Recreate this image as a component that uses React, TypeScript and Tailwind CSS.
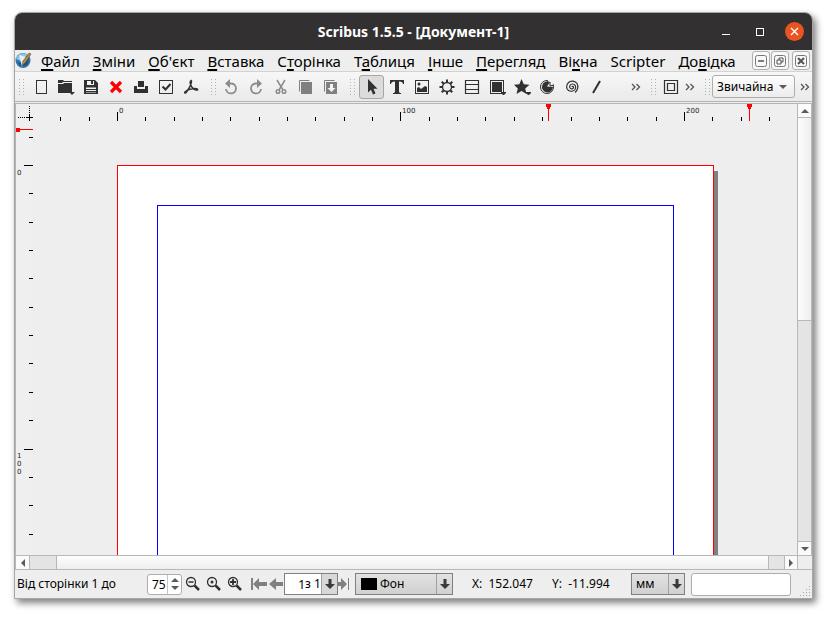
import type { ReactNode } from "react";

const STEP = 28.35;
const DARK = "#323030";
const GREY = "#808080";

const menus: [string, string, string][] = [
  ["", "Ф", "айл"],
  ["", "З", "міни"],
  ["", "О", "б'єкт"],
  ["", "В", "ставка"],
  ["С", "т", "орінка"],
  ["Т", "а", "блиця"],
  ["", "І", "нше"],
  ["", "П", "ерегляд"],
  ["Ві", "к", "на"],
  ["Scripter", "", ""],
  ["До", "в", "ідка"],
];

function Icon({ children, w = 16, h = 16 }: { children: ReactNode; w?: number; h?: number }) {
  return (
    <svg width={w} height={h} viewBox={`0 0 ${w} ${h}`} fill="none" aria-hidden="true" className="shrink-0">
      {children}
    </svg>
  );
}

function ToolButton({ label, active, children }: { label: string; active?: boolean; children: ReactNode }) {
  return (
    <button
      type="button"
      aria-label={label}
      className={
        active
          ? "flex h-6 w-[25px] shrink-0 items-center justify-center rounded-[3px] border border-[#a6a6a6] bg-[#dcdcdc]"
          : "flex h-6 w-[25px] shrink-0 items-center justify-center"
      }
    >
      {children}
    </button>
  );
}

function Handle() {
  const dots = [0, 3, 6, 9, 12, 15].flatMap((y) => [
    [0, y],
    [4, y],
  ]);
  return (
    <Icon w={6} h={18}>
      {dots.map(([x, y]) => (
        <rect key={`${x}-${y}`} x={x} y={y + 1} width="1" height="1" fill="#b4b4b4" />
      ))}
    </Icon>
  );
}

function More() {
  return (
    <button type="button" aria-label="Більше" className="flex h-6 w-[13px] shrink-0 items-center justify-center">
      <Icon w={10} h={8}>
        <path d="M1 1l3 3-3 3M5.500 1l3 3-3 3" stroke="#555" strokeWidth="1.300" />
      </Icon>
    </button>
  );
}

const fileIcons: [string, ReactNode][] = [
  ["Новий", <rect x="3.500" y="1.500" width="10" height="13" stroke={DARK} />],
  [
    "Відкрити",
    <g fill={DARK}>
      <path d="M1 1h5l1 1h8v1H6L5 4H1zM1 5h5l1-1h8v10H1z" />
      <path d="M12 13h6l-3 3z" />
    </g>,
  ],
  [
    "Зберегти",
    <g>
      <path d="M1 1h11l3 3v11H1z" fill={DARK} />
      <path d="M4 2h7v4H4z M3 8.500h10v5H3z" fill="#f2f2f2" />
      <path d="M8 2h2v3H8z M3 10h10v1H3z M3 12h10v1H3z" fill={DARK} />
    </g>,
  ],
  ["Закрити", <path d="M3 3l10 10M13 3L3 13" stroke="#f00" strokeWidth="3.200" />],
  ["Друк", <path d="M5 2h6v6h1V7h3v7H1V7h3v3h8V8H5z" fill={DARK} />],
  [
    "Перевірити",
    <g stroke={DARK}>
      <rect x="1.500" y="1.500" width="13" height="13" />
      <path d="M4.500 7.500l3 3 5-5.500" strokeWidth="2" />
    </g>,
  ],
  [
    "PDF",
    <path
      d="M8 1.500c-1.500 1-.5 4 .5 6s3.500 3.500 5.500 3.500c1 0 1-1-.5-1.300C9 9 4 11 2 13c-1 1.200.5 1.500 1.500 0C6 9.500 8.500 5 8.500 2z"
      stroke={DARK}
      strokeWidth="1.500"
    />,
  ],
];

const editIcons: [string, ReactNode][] = [
  [
    "Скасувати",
    <g>
      <path d="M6 4.500h2.500a5 5 0 1 1-5.500 5.500" stroke="#8c8c8c" strokeWidth="1.800" />
      <path d="M7 0v9L2 4.500z" fill="#8c8c8c" />
    </g>,
  ],
  [
    "Повторити",
    <g>
      <path d="M10 4.500H7.500a5 5 0 1 0 5.500 5.500" stroke="#8c8c8c" strokeWidth="1.800" />
      <path d="M9 0v9l5-4.500z" fill="#8c8c8c" />
    </g>,
  ],
  [
    "Вирізати",
    <g stroke="#8c8c8c" strokeWidth="1.500">
      <path d="M4 1l6 10M12 1L6 11" />
      <circle cx="5" cy="12.500" r="1.800" />
      <circle cx="11" cy="12.500" r="1.800" />
    </g>,
  ],
  [
    "Копіювати",
    <g>
      <path d="M1.500 12.500V1.500h10" stroke={GREY} />
      <rect x="3" y="3" width="11" height="12" fill={GREY} />
    </g>,
  ],
  [
    "Вставити",
    <g>
      <path d="M1.500 12.500V1.500h10" stroke={GREY} />
      <rect x="3" y="3" width="11" height="12" fill={GREY} />
      <path d="M7 5h3v4h2.500l-4 4-4-4H7z" fill="#f4f4f4" />
    </g>,
  ],
];

const toolIcons: [string, ReactNode][] = [
  ["Вибір", <path d="M4 0v13.500l3-2.800 2 4.800 2.500-1-2-4.700h4z" fill={DARK} />],
  ["Текст", <path d="M1 1h14v4h-1c-.3-1.500-1-2.500-4-2.500V12c0 1.500.5 2 2 2v1H4v-1c1.500 0 2-.5 2-2V2.500C3 2.500 2.300 3.500 2 5H1z" fill={DARK} />],
  [
    "Зображення",
    <g>
      <rect x="1.500" y="1.500" width="13" height="13" stroke={DARK} />
      <path d="M3 13V9l2-1 2 2 4-3 2 1v5z" fill={DARK} />
      <circle cx="5" cy="5" r="1.500" fill={DARK} />
    </g>,
  ],
  [
    "Рендер",
    <g stroke={DARK}>
      <circle cx="8" cy="8" r="4.500" strokeWidth="1.400" />
      <path d="M8 .5v3M8 12.500v3M.5 8h3M12.500 8h3M2.700 2.700l2.100 2.100M11.200 11.200l2.100 2.100M2.700 13.300l2.100-2.100M11.200 4.800l2.100-2.100" strokeWidth="2" />
    </g>,
  ],
  ["Таблиця", <path d="M1.500 1.500h13v13h-13zM1.500 5.500h13M1.500 10.500h13" stroke={DARK} strokeWidth="1.200" />],
  [
    "Фігура",
    <g>
      <rect x="2.500" y="1.500" width="13" height="13" stroke={DARK} />
      <path d="M4 3h10v10H4zM13 13h5v1l-2.500 2.500L13 14z" fill={DARK} />
    </g>,
  ],
  [
    "Багатокутник",
    <path d="M8.500 0l2.300 5.200 5.700.5-4.300 3.700 1.300 5.600-5-3-5 3 1.300-5.600L1 5.700l5.300-.5zM13 13h5v1l-2.500 2.500L13 14z" fill={DARK} />,
  ],
  [
    "Дуга",
    <g>
      <circle cx="8" cy="8" r="6.500" stroke={DARK} />
      <path d="M9 7V0h7v5z" fill="#f1f1f1" />
      <path d="M8 7.500L11 3A5.500 5.500 0 1 0 14 8z" fill={DARK} />
      <path d="M11 3v4l4-1" stroke={DARK} />
    </g>,
  ],
  [
    "Спіраль",
    <path
      d="M8 8c0-1 1.500-.8 1.500.5S7 10.500 6 9s0-4 2.500-4S12 7 11.500 9.500 7 13 4.500 11.500 2 6 4.500 3.500s7-1.500 8.500 1 1 7-2 9"
      stroke={DARK}
      strokeWidth="1.200"
    />,
  ],
  ["Лінія", <path d="M4 14l7-12" stroke={DARK} strokeWidth="2" />],
];

function HorizontalRuler() {
  const ticks = Array.from({ length: 26 }, (_, i) => i - 2);
  return (
    <svg className="h-[17px] w-full bg-[#efefef] font-['DejaVu_Sans',sans-serif]" aria-label="Горизонтальна лінійка">
      {ticks.map((k) => {
        const x = Math.floor(84.4 + k * STEP);
        const major = k % 10 === 0;
        return <rect key={k} x={x} y={major ? 8 : 13} width="1" height={major ? 9 : 4} fill="#000" />;
      })}
      {[0, 100, 200].map((n) => (
        <text key={n} x={Math.floor(84.4 + (n / 10) * STEP) + 2} y="9" fontSize="7" fill="#222">
          {n}
        </text>
      ))}
      {[515, 716].map((x) => (
        <path key={x} d={`M${x - 2} 0h5v3h-1v2h-1v12h-1V5h-1V3h-1z`} fill="#f00" />
      ))}
    </svg>
  );
}

function VerticalRuler() {
  const ticks = Array.from({ length: 15 }, (_, i) => i - 1);
  return (
    <svg className="h-full w-[17px] bg-[#efefef] font-['DejaVu_Sans',sans-serif]" aria-label="Вертикальна лінійка">
      {ticks.map((k) => {
        const y = Math.floor(44.5 + k * STEP);
        const major = k % 10 === 0;
        return <rect key={k} x={major ? 8 : 13} y={y} width={major ? 9 : 4} height="1" fill="#000" />;
      })}
      <text x="1" y="54" fontSize="7" fill="#222">0</text>
      <text fontSize="7" fill="#222">
        <tspan x="1" y="337">1</tspan>
        <tspan x="1" y="345">0</tspan>
        <tspan x="1" y="353">0</tspan>
      </text>
      <path d="M0 7h4v1h13v1H4v2H0z" fill="#f00" />
    </svg>
  );
}

function Arrow({ dir }: { dir: "up" | "down" | "left" | "right" }) {
  const paths = {
    up: "M0 6l4-4 4 4z",
    down: "M0 2l4 4 4-4z",
    left: "M6 0L2 4l4 4z",
    right: "M2 0l4 4-4 4z",
  };
  return (
    <Icon w={8} h={8}>
      <path d={paths[dir]} fill="#5a5a5a" />
    </Icon>
  );
}

function DropArrow() {
  return (
    <Icon w={10} h={12}>
      <path d="M3.500 1h3v5H10l-5 5-5-5h3.500z" fill="#3a3a3a" />
    </Icon>
  );
}

function Zoom({ label, children }: { label: string; children: ReactNode }) {
  return (
    <button type="button" aria-label={label} className="flex h-6 w-[21px] shrink-0 items-center justify-center">
      <Icon>
        <circle cx="6" cy="6" r="4.500" stroke={DARK} strokeWidth="1.300" />
        <path d="M9.500 9.500l4.500 4.500" stroke={DARK} strokeWidth="2.500" />
        {children}
      </Icon>
    </button>
  );
}

const mdiButton =
  "flex h-[19px] w-[18px] items-center justify-center rounded-[3px] border border-[#b0b0b0] bg-[#f8f8f8]";

export default function App() {
  return (
    <div className="bg-white pt-3 pr-[18px] pb-[18px] pl-[14px] font-['Noto_Sans','Open_Sans',sans-serif] text-[12px] leading-4 text-black">
      <div className="flex flex-col overflow-hidden rounded-t-lg border border-[#a6a6a6] bg-[#eeeeee] shadow-[3px_4px_7px_0_#00000080]">
        <header className="flex h-[37px] items-center bg-[#323030] text-white">
          <div className="w-[106px]" />
          <h1 className="flex-1 text-center text-[14px] leading-5 font-bold">Scribus 1.5.5 - [Документ-1]</h1>
          <div className="flex w-[106px] items-center justify-end gap-5 pr-2">
            <button type="button" aria-label="Згорнути" className="flex h-5 w-[14px] items-center justify-center">
              <Icon w={8} h={8}><path d="M0 6.500h8" stroke="#fff" /></Icon>
            </button>
            <button type="button" aria-label="Розгорнути" className="flex h-5 w-[14px] items-center justify-center">
              <Icon w={8} h={8}><rect x=".5" y=".5" width="7" height="7" stroke="#fff" /></Icon>
            </button>
            <button type="button" aria-label="Закрити вікно" className="-ml-0.5 flex size-[19px] items-center justify-center rounded-full bg-[#e95420]">
              <Icon w={9} h={9}><path d="M1 1l7 7M8 1L1 8" stroke="#fff" strokeWidth="1.400" /></Icon>
            </button>
          </div>
        </header>

        <nav className="flex h-[22px] items-center border-b border-[#d2d2d2] text-[15px] leading-5">
          <Icon w={17} h={17}>
            <circle cx="8" cy="8.500" r="7.500" fill="#2b78b0" />
            <path d="M1 7a7.500 7.500 0 0 1 12-4L6 9z" fill="#8fc3e6" />
            <path d="M3 11a6 6 0 0 0 10 1l1-5z" fill="#1b5485" />
            <path d="M4 3l3 12 2-4 2-6z" fill="#e8eef2" />
            <path d="M7 14l1-5 6-8 2 1-5 8z" fill="#b08a4a" stroke="#4d3a1b" strokeWidth=".5" />
          </Icon>
          <div className="flex flex-1 gap-[13px] pl-[9px]">
            {menus.map(([a, b, c]) => (
              <button key={a + b + c} type="button" className="whitespace-nowrap">
                {a}
                <span className="underline decoration-2 underline-offset-2">{b}</span>
                {c}
              </button>
            ))}
          </div>
          <div className="flex gap-px pr-[2px]">
            <button type="button" aria-label="Згорнути документ" className={mdiButton}>
              <Icon w={12} h={12}><rect x=".5" y=".5" width="11" height="11" rx="2" stroke="#777" /><path d="M3 6h6" stroke="#555" strokeWidth="1.500" /></Icon>
            </button>
            <button type="button" aria-label="Відновити документ" className={mdiButton}>
              <Icon w={12} h={12}><rect x=".5" y=".5" width="11" height="11" rx="2" stroke="#777" /><path d="M5 5V3h4v4H7M3 5h4v4H3z" stroke="#555" /></Icon>
            </button>
            <button type="button" aria-label="Закрити документ" className={`${mdiButton} ml-[2px]`}>
              <Icon w={12} h={12}><rect x=".5" y=".5" width="11" height="11" rx="2" stroke="#777" /><path d="M3 3l6 6M9 3L3 9" stroke="#555" strokeWidth="2" /></Icon>
            </button>
          </div>
        </nav>

        <div className="flex h-[30px] items-center border-b border-[#b4b4b4] bg-linear-to-b from-[#f7f7f7] to-[#eaeaea]">
          <div className="flex w-[13px] justify-end pr-[3px]"><Handle /></div>
          {fileIcons.map(([label, icon], i) => (
            <ToolButton key={label} label={label}><Icon w={i === 1 ? 18 : 16}>{icon}</Icon></ToolButton>
          ))}
          <div className="flex w-[15px] justify-end pr-px"><Handle /></div>
          {editIcons.map(([label, icon]) => (
            <ToolButton key={label} label={label}><Icon>{icon}</Icon></ToolButton>
          ))}
          <div className="flex w-4 justify-end pr-[3px]"><Handle /></div>
          {toolIcons.map(([label, icon], i) => (
            <ToolButton key={label} label={label} active={i === 0}>
              <Icon w={i === 5 || i === 6 ? 18 : 16}>{icon}</Icon>
            </ToolButton>
          ))}
          <div className="flex flex-1 items-center justify-end pr-px">
            <More />
            <div className="flex w-4 justify-center pl-2"><Handle /></div>
            <ToolButton label="Рамка">
              <Icon><path d="M1.500 1.500h13v13h-13zM4.500 4.500h7v7h-7z" stroke={DARK} strokeWidth="1.200" /></Icon>
            </ToolButton>
            <More />
            <div className="flex w-4 justify-center pl-2"><Handle /></div>
            <div className="grid items-center">
              <select aria-label="Якість перегляду" className="col-start-1 row-start-1 h-[23px] w-[83px] appearance-none rounded-[3px] border border-[#adadad] bg-linear-to-b from-[#fdfdfd] to-[#ececec] pl-1">
                <option>Звичайна</option>
              </select>
              <span className="pointer-events-none col-start-1 row-start-1 justify-self-end pr-2"><Arrow dir="down" /></span>
            </div>
            <div className="ml-[3px] flex"><More /></div>
          </div>
        </div>

        <div className="mt-px flex border-t border-l border-[#b4b4b4]">
          <div className="w-[17px] shrink-0">
            <svg className="block h-[17px] w-[17px] bg-[#efefef]" aria-hidden="true">
              <path d="M13.500 2v8M2 13.500h8" stroke="#000" strokeDasharray="1 1" />
              <path d="M13.500 10v7M10 13.500h7" stroke="#000" />
            </svg>
            <div className="h-[434px]"><VerticalRuler /></div>
          </div>
          <main className="flex min-w-0 flex-1 flex-col">
            <HorizontalRuler />
            <div className="h-[434px] overflow-hidden pt-[44px] pl-[84px]">
              <div className="h-[842px] w-[597px] border border-[#f00] bg-white p-[39px] shadow-[4px_6px_0_#808080]">
                <div className="h-full border border-[#00f]" />
              </div>
            </div>
          </main>
          <div className="flex w-[15px] shrink-0 flex-col border-x border-[#b8b8b8] bg-[#e4e4e4]">
            <button type="button" aria-label="Вгору" className="flex h-[14px] items-center justify-center border-b border-[#b8b8b8] bg-[#fafafa]"><Arrow dir="up" /></button>
            <div className="h-[203px] border-b border-[#b8b8b8] bg-linear-to-r from-[#fdfdfd] to-[#eeeeee]" />
            <div className="flex-1" />
            <button type="button" aria-label="Вниз" className="flex h-[14px] items-center justify-center border-t border-[#b8b8b8] bg-[#fafafa]"><Arrow dir="down" /></button>
          </div>
        </div>
        <div className="flex h-[15px] border-y border-l border-[#b8b8b8] bg-[#e4e4e4]">
          <button type="button" aria-label="Ліворуч" className="flex w-[14px] items-center justify-center border-r border-[#b8b8b8] bg-[#fafafa]"><Arrow dir="left" /></button>
          <div className="w-[26px]" />
          <div className="flex-1 border-x border-[#b8b8b8] bg-linear-to-b from-[#fdfdfd] to-[#eeeeee]" />
          <div className="w-[15px]" />
          <button type="button" aria-label="Праворуч" className="flex w-[14px] items-center justify-center border-x border-[#b8b8b8] bg-[#fafafa]"><Arrow dir="right" /></button>
          <div className="w-[14px] bg-[#eeeeee]" />
        </div>

        <footer className="flex h-7 items-center pl-[2px]">
          <span className="w-[130px] whitespace-nowrap">Від сторінки 1 до</span>
          <div className="flex h-[21px] w-[35px] items-center overflow-hidden rounded-[3px] border border-[#adadad] bg-white">
            <input aria-label="Масштаб" defaultValue="75" className="h-full w-5 min-w-0 border-r border-[#c4c4c4] pl-1 outline-none" />
            <div className="flex flex-1 flex-col items-center"><Arrow dir="up" /><Arrow dir="down" /></div>
          </div>
          <Zoom label="Зменшити"><path d="M3.500 6h5" stroke={DARK} strokeWidth="1.500" /></Zoom>
          <Zoom label="Масштаб 100%"><circle cx="6" cy="6" r="1.500" fill={DARK} /></Zoom>
          <Zoom label="Збільшити"><path d="M3 6h6M6 3v6" stroke={DARK} strokeWidth="1.800" /></Zoom>
          <button type="button" aria-label="Перша сторінка" className="ml-[6px] flex">
            <Icon><path d="M0 2h2v12H0zM2 8l6-6v4h8v4H8v4z" fill={GREY} /></Icon>
          </button>
          <button type="button" aria-label="Попередня сторінка" className="ml-[2px] flex">
            <Icon w={15}><path d="M0 8l7-6v4h7v4H7v4z" fill={GREY} /></Icon>
          </button>
          <div className="flex h-[22px] w-[54px] items-center border border-[#808080] bg-[#d8d8d8]">
            <div className="flex h-full w-[37px] items-center overflow-hidden border-r border-[#a0a0a0] bg-white">
              <input aria-label="Сторінка" defaultValue="1" className="h-full w-5 min-w-0 text-right outline-none" />
              <span className="whitespace-nowrap">з 1</span>
            </div>
            <span className="flex flex-1 justify-center"><DropArrow /></span>
          </div>
          <button type="button" aria-label="Остання сторінка" className="flex">
            <Icon w={11}><path d="M0 6h3V2l6 6-6 6v-4H0zM10 2h1v12h-1z" fill={GREY} /></Icon>
          </button>
          <div className="ml-[6px] grid items-center">
            <select aria-label="Шар" className="col-start-1 row-start-1 h-[22px] w-[98px] appearance-none border border-[#808080] bg-linear-to-b from-[#e2e2e2] to-[#d0d0d0] pl-6">
              <option>Фон</option>
            </select>
            <span className="pointer-events-none col-start-1 row-start-1 ml-[6px] h-3 w-4 bg-black" />
            <span className="pointer-events-none col-start-1 row-start-1 mr-px flex h-5 w-4 items-center justify-center justify-self-end border-l border-[#a0a0a0]"><DropArrow /></span>
          </div>
          <span className="ml-[19px] w-20 whitespace-pre">X:  152.047</span>
          <span className="w-[79px] whitespace-pre">Y:  -11.994</span>
          <div className="grid items-center">
            <select aria-label="Одиниці" className="col-start-1 row-start-1 h-[22px] w-[54px] appearance-none border border-[#808080] bg-linear-to-b from-[#e2e2e2] to-[#d0d0d0] pl-1">
              <option>мм</option>
            </select>
            <span className="pointer-events-none col-start-1 row-start-1 mr-px flex h-5 w-4 items-center justify-center justify-self-end border-l border-[#a0a0a0]"><DropArrow /></span>
          </div>
          <input aria-label="Стан" readOnly className="ml-[6px] h-[23px] w-[100px] rounded-[3px] border border-[#adadad] bg-white" />
          <div className="flex flex-1 justify-end self-end pr-[2px] pb-[2px]">
            <Icon w={10} h={10}>
              <path d="M9 0h1v1H9zM6 3h1v1H6zM9 3h1v1H9zM3 6h1v1H3zM6 6h1v1H6zM9 6h1v1H9zM0 9h1v1H0zM3 9h1v1H3zM6 9h1v1H6zM9 9h1v1H9z" fill="#aaa" />
            </Icon>
          </div>
        </footer>
      </div>
    </div>
  );
}
